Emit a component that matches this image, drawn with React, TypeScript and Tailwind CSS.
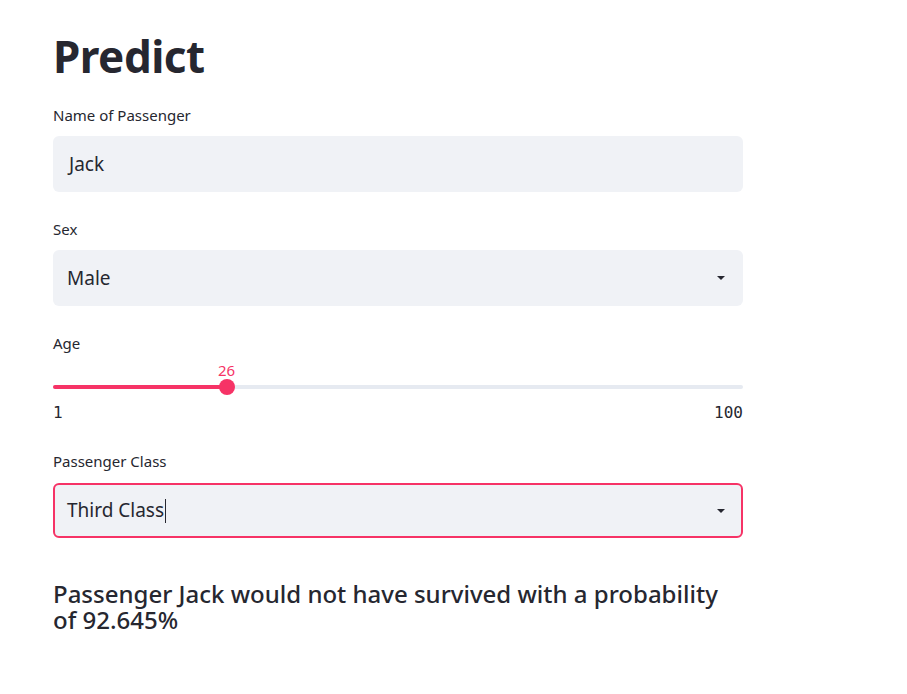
import React from "react";

function Caret() {
  return (
    <svg width="10" height="6" viewBox="0 0 10 6" className="shrink-0">
      <path d="M1 1 L9 1 L5 5 Z" fill="#262730" />
    </svg>
  );
}

export default function App() {
  return (
    <div className="min-h-[694px] w-[907px] bg-white text-[#262730] font-['Noto_Sans',sans-serif]">
      <div className="ml-[53px] w-[690px] pt-[28px] flex flex-col">
        <h1 className="text-[44px] leading-[56px] font-bold tracking-[-0.5px]">Predict</h1>

        <div className="mt-[22px] text-[15px] leading-[18px]">Name of Passenger</div>
        <div className="mt-[12px] h-[56px] rounded-[6px] bg-[#f0f2f6] flex items-center px-[16px] text-[19px]">
          Jack
        </div>

        <div className="mt-[28px] text-[15px] leading-[18px]">Sex</div>
        <div className="mt-[12px] h-[56px] rounded-[6px] bg-[#f0f2f6] flex items-center justify-between pl-[14px] pr-[17px] text-[19px]">
          <span>Male</span>
          <Caret />
        </div>

        <div className="mt-[28px] text-[15px] leading-[18px]">Age</div>
        <div className="relative mt-[12px] h-[40px]">
          <div className="absolute left-0 right-0 top-[21px] h-[4px] rounded-full bg-[#e6eaf1]" />
          <div className="absolute left-0 w-[174px] top-[21px] h-[4px] rounded-l-full bg-[#f63366]" />
          <div className="absolute left-[166px] top-[15px] w-[16px] h-[16px] rounded-full bg-[#f63366]" />
          <div className="absolute left-[165px] top-[-3px] text-[15px] leading-[18px] text-[#f63366]">26</div>
        </div>
        <div className="flex justify-between text-[16px] leading-[18px] font-['DejaVu_Sans_Mono',monospace] mt-0">
          <span>1</span>
          <span>100</span>
        </div>

        <div className="mt-[30px] text-[15px] leading-[18px]">Passenger Class</div>
        <div className="mt-[13px] h-[55px] rounded-[6px] bg-[#f0f2f6] border-2 border-[#f63366] flex items-center justify-between pl-[12px] pr-[15px] text-[19px]">
          <span className="flex items-center">
            Third Class<span className="inline-block w-[1px] h-[24px] bg-[#262730] ml-[1px]" />
          </span>
          <Caret />
        </div>

        <div className="mt-[43px] text-[24px] leading-[26px] font-medium pr-[10px]">
          Passenger Jack would not have survived with a probability of 92.645%
        </div>
      </div>
    </div>
  );
}
